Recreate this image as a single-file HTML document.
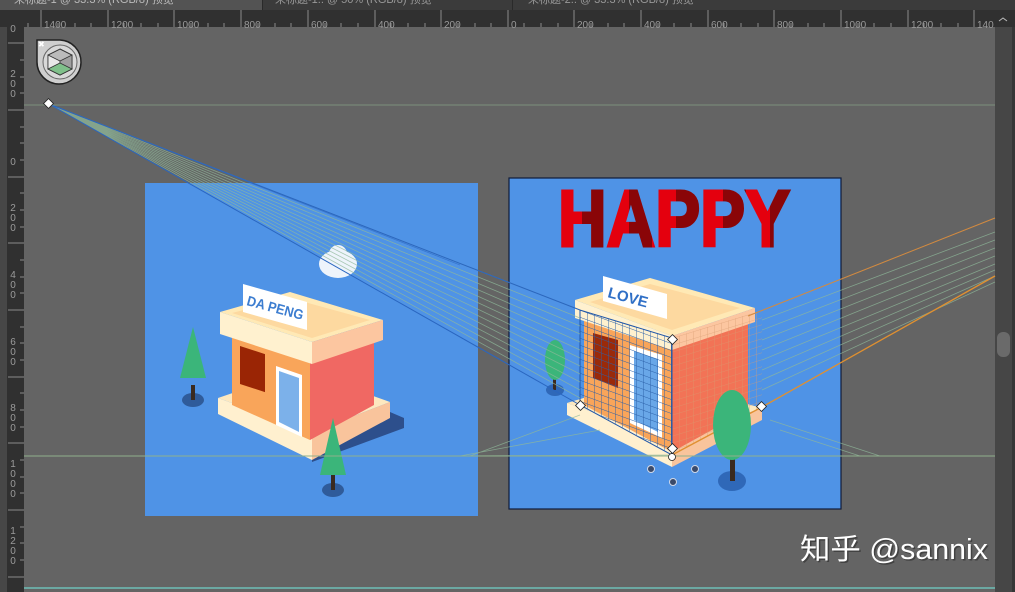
<!DOCTYPE html>
<html><head><meta charset="utf-8"><style>
html,body{margin:0;padding:0;background:#646464;width:1015px;height:592px;overflow:hidden}
svg{display:block}
text{font-family:"Liberation Sans","Noto Sans CJK SC",sans-serif}
</style></head><body>
<svg width="1015" height="592" viewBox="0 0 1015 592" xmlns="http://www.w3.org/2000/svg">
<defs>
<pattern id="gridL" width="7" height="7" patternUnits="userSpaceOnUse" patternTransform="translate(580,310) skewY(20)">
<path d="M0 0H7M0 0V7" stroke="#2a5fa8" stroke-width="0.9" fill="none"/>
</pattern>
<pattern id="gridR" width="7" height="7" patternUnits="userSpaceOnUse" patternTransform="translate(672,338) skewY(-17)">
<path d="M0 0H7M0 0V7" stroke="#d79a70" stroke-width="0.8" fill="none" opacity="0.8"/>
</pattern>
<pattern id="happy" width="47" height="80" patternUnits="userSpaceOnUse" x="558">
<rect width="24" height="80" fill="#e4000e"/><rect x="24" width="23" height="80" fill="#8a0508"/>
</pattern>
<clipPath id="cl1"><rect x="145" y="183" width="333" height="333"/></clipPath>
</defs>
<rect x="0" y="0" width="1015" height="10" fill="#3b3b3b"/>
<rect x="0" y="0" width="262" height="10" fill="#535353"/>
<rect x="262" y="0" width="1" height="10" fill="#2a2a2a"/>
<rect x="512" y="0" width="1" height="10" fill="#2a2a2a"/>
<text x="14" y="3" font-size="11" fill="#bbb">未标题-1 @ 33.3% (RGB/8) 预览</text>
<text x="275" y="3" font-size="11" fill="#999">未标题-1.. @ 50% (RGB/8) 预览</text>
<text x="528" y="3" font-size="11" fill="#999">未标题-2.. @ 33.3% (RGB/8) 预览</text>
<rect x="0" y="10" width="1015" height="17" fill="#303030"/>
<g stroke="#8a8a8a" stroke-width="1">
<path d="M41 10V27M108 10V27M174 10V27M241 10V27M308 10V27M375 10V27M441 10V27M508 10V27M574 10V27M641 10V27M708 10V27M774 10V27M841 10V27M908 10V27M974 10V27"/>
<path d="M28 23V27M58 23V27M75 23V27M91 23V27M124 23V27M141 23V27M158 23V27M191 23V27M208 23V27M224 23V27M258 23V27M275 23V27M291 23V27M325 23V27M341 23V27M358 23V27M391 23V27M408 23V27M425 23V27M458 23V27M475 23V27M491 23V27M524 23V27M541 23V27M558 23V27M591 23V27M608 23V27M624 23V27M658 23V27M674 23V27M691 23V27M724 23V27M741 23V27M758 23V27M791 23V27M808 23V27M824 23V27M858 23V27M874 23V27M891 23V27M924 23V27M941 23V27M958 23V27"/>
</g>
<g font-size="10" fill="#9a9a9a">
<text x="44" y="28">1400</text><text x="111" y="28">1200</text><text x="177" y="28">1000</text><text x="244" y="28">800</text><text x="311" y="28">600</text><text x="378" y="28">400</text><text x="444" y="28">200</text><text x="511" y="28">0</text><text x="577" y="28">200</text><text x="644" y="28">400</text><text x="711" y="28">600</text><text x="777" y="28">800</text><text x="844" y="28">1000</text><text x="911" y="28">1200</text><text x="977" y="28">140</text>
</g>
<rect x="0" y="27" width="24" height="565" fill="#303030"/>
<rect x="0" y="27" width="7" height="565" fill="#474747"/>
<g stroke="#8a8a8a" stroke-width="1">
<path d="M8 43H24M8 110H24M8 177H24M8 243H24M8 310H24M8 377H24M8 443H24M8 510H24M8 577H24"/>
<path d="M20 60H24M20 77H24M20 93H24M20 127H24M20 143H24M20 160H24M20 193H24M20 210H24M20 227H24M20 260H24M20 277H24M20 293H24M20 327H24M20 343H24M20 360H24M20 393H24M20 410H24M20 427H24M20 460H24M20 477H24M20 493H24M20 527H24M20 543H24M20 560H24"/>
</g>
<g font-size="10" fill="#9a9a9a" text-anchor="middle">
<text x="13" y="32">0</text>
<text x="13" y="77">2</text><text x="13" y="87">0</text><text x="13" y="97">0</text>
<text x="13" y="165">0</text>
<text x="13" y="211">2</text><text x="13" y="221">0</text><text x="13" y="231">0</text>
<text x="13" y="278">4</text><text x="13" y="288">0</text><text x="13" y="298">0</text>
<text x="13" y="345">6</text><text x="13" y="355">0</text><text x="13" y="365">0</text>
<text x="13" y="411">8</text><text x="13" y="421">0</text><text x="13" y="431">0</text>
<text x="13" y="467">1</text><text x="13" y="477">0</text><text x="13" y="487">0</text><text x="13" y="497">0</text>
<text x="13" y="534">1</text><text x="13" y="544">2</text><text x="13" y="554">0</text><text x="13" y="564">0</text>
</g>
<rect x="995" y="27" width="20" height="565" fill="#464646"/>
<rect x="1012" y="27" width="3" height="565" fill="#363636"/>
<rect x="997" y="332" width="13" height="25" rx="6" fill="#6a6a6a"/>
<path d="M999 21l4-3 4 3" stroke="#bbb" fill="none"/>

<rect x="145" y="183" width="333" height="333" fill="#4f93e6"/>
<g clip-path="url(#cl1)">
<ellipse cx="338" cy="264" rx="19" ry="14" fill="#eef4fb"/>
<circle cx="338" cy="254" r="9" fill="#eef4fb"/>
<polygon points="312,462 404,428 404,418 390,412 312,452" fill="#2d4f8c"/>
<polygon points="218,398 300,370 390,402 312,432" fill="#fde8bf"/>
<polygon points="218,398 312,432 312,460 218,414" fill="#fff0cf"/>
<polygon points="312,432 390,402 390,418 312,460" fill="#f9c49c"/>
<polygon points="232,333 310,360 310,440 232,405" fill="#f9a55a"/>
<polygon points="310,360 374,338 374,405 310,440" fill="#f06863"/>
<rect x="240" y="348" width="25" height="38" fill="#9a2505" transform="skewY(18) translate(0,-80)"/>
<polygon points="276,366 302,375 302,437 276,425" fill="#fff"/>
<polygon points="279,371 299,378 299,432 279,422" fill="#7cb1ea"/>
<polygon points="220,312 290,292 383,320 312,342" fill="#ffe9b5"/>
<polygon points="232,313 290,298 370,320 312,338" fill="#fdd9a0"/>
<polygon points="220,312 312,342 312,364 220,334" fill="#fff1cf"/>
<polygon points="312,342 383,320 383,340 312,364" fill="#fcc6a0"/>
<polygon points="243,284 307,302 307,330 243,312" fill="#fff"/>
<text x="246" y="305" font-size="14" font-weight="bold" fill="#3c7dd0" transform="rotate(15 246 305)" textLength="58" lengthAdjust="spacingAndGlyphs">DA PENG</text>
<ellipse cx="193" cy="400" rx="11" ry="7" fill="#2f5b9a"/>
<rect x="191" y="385" width="4" height="15" fill="#3a2a20"/>
<polygon points="193,327 206,378 180,378" fill="#3bb57a"/>
<ellipse cx="333" cy="490" rx="11" ry="7" fill="#2f5b9a"/>
<rect x="331" y="474" width="4" height="16" fill="#3a2a20"/>
<polygon points="333,418 346,475 320,475" fill="#3bb57a"/>
</g>

<rect x="509" y="178" width="332" height="331" fill="#4f93e6" stroke="#101c3a" stroke-width="1.2"/>
<text x="558" y="246" font-size="80" font-weight="bold" fill="url(#happy)" stroke="url(#happy)" stroke-width="3" textLength="232" lengthAdjust="spacingAndGlyphs">HAPPY</text>
<polygon points="567,403 650,378 762,408 672,440" fill="#fde8bf"/>
<polygon points="567,403 672,440 672,467 567,415" fill="#fff0cf"/>
<polygon points="672,440 762,408 762,420 672,467" fill="#f9c49c"/>
<polygon points="584,318 672,340 672,452 584,405" fill="#f9a55a"/>
<polygon points="672,340 748,316 748,410 672,452" fill="#f27356"/>
<polygon points="593,333 618,340 618,388 593,378" fill="#9a2a0a"/>
<polygon points="630,345 662,355 662,438 630,423" fill="#fff"/>
<polygon points="634,351 658,359 658,432 634,420" fill="#69a7e8"/>
<polygon points="575,300 650,278 755,308 672,336" fill="#ffe9b5"/>
<polygon points="590,302 650,284 740,308 672,330" fill="#fdd9a0"/>
<polygon points="575,300 672,336 672,350 575,318" fill="#fff1cf"/>
<polygon points="672,336 755,308 755,322 672,350" fill="#fcc6a0"/>
<polygon points="603,276 667,294 667,319 603,301" fill="#fff"/>
<text x="607" y="297" font-size="15" font-weight="bold" fill="#2f6fc6" transform="rotate(15 607 297)">LOVE</text>
<polygon points="580,310 672,338 672,455 580,405" fill="url(#gridL)"/>
<polygon points="672,338 762,310 762,407 672,455" fill="url(#gridR)"/>
<path d="M580,310 L580,405 L672,455 L672,338 Z" stroke="#1f56a8" fill="none"/>
<path d="M672,455 L762,407" stroke="#e09030" stroke-width="1.3"/>
<ellipse cx="555" cy="390" rx="9" ry="6" fill="#2f68b8"/>
<rect x="553" y="375" width="3" height="15" fill="#3a2a20"/>
<ellipse cx="555" cy="360" rx="10" ry="20" fill="#3bb57a"/>
<ellipse cx="732" cy="481" rx="14" ry="10" fill="#2f68b8"/>
<rect x="730" y="458" width="5" height="23" fill="#3a2a20"/>
<ellipse cx="732" cy="425" rx="19" ry="35" fill="#3bb57a"/>

<g stroke="#8fb89a" stroke-width="0.8" fill="none" opacity="0.75">
<path d="M49,104 L580,310M49,104 L580,318M49,104 L580,326M49,104 L580,334M49,104 L580,342M49,104 L580,350M49,104 L580,358M49,104 L580,366M49,104 L580,374M49,104 L580,382M49,104 L580,390M49,104 L580,398"/>
</g>
<path d="M49,104 L580,310" stroke="#2a66c0" stroke-width="1"/>
<path d="M49,104 L580,405" stroke="#2a66c0" stroke-width="1"/>
<path d="M49,104 L460,265" stroke="#2a66c0" stroke-width="0.8" opacity="0.6"/>
<g stroke="#8fb89a" stroke-width="0.8" fill="none" opacity="0.75">
<path d="M762,320 L995,232M762,330 L995,240M762,340 L995,248M762,350 L995,256M762,360 L995,264M762,370 L995,270M762,380 L995,276M762,390 L995,282"/>
<path d="M672,455 L440,456M600,430 L460,456M580,415 L470,456M770,420 L880,456M780,430 L860,456"/>
</g>
<path d="M748,316 L995,218" stroke="#d28a40" stroke-width="1"/>
<path d="M762,407 L995,276" stroke="#e09030" stroke-width="1.3"/>
<path d="M24,105H995" stroke="#8fb08c" stroke-width="0.8" opacity="0.8"/>
<path d="M24,456H995" stroke="#8fb08c" stroke-width="1"/>
<path d="M24,588H995" stroke="#6fd0c8" stroke-width="1.2"/>
<g fill="#fff" stroke="#222" stroke-width="0.8">
<rect x="45" y="100" width="7" height="7" transform="rotate(45 48.5 103.5)"/>
<rect x="669" y="336" width="7" height="7" transform="rotate(45 672.5 339.5)"/>
<rect x="577" y="402" width="7" height="7" transform="rotate(45 580.5 405.5)"/>
<rect x="758" y="403" width="7" height="7" transform="rotate(45 761.5 406.5)"/>
<rect x="669" y="445" width="7" height="7" transform="rotate(45 672.5 448.5)"/>
<circle cx="672" cy="457" r="3.5"/>
</g>
<g fill="#3a4a6a" stroke="#cfd8e8" stroke-width="1">
<circle cx="651" cy="469" r="3.5"/><circle cx="695" cy="469" r="3.5"/><circle cx="673" cy="482" r="3.5"/>
</g>
<path d="M37,40 H60 A22,22 0 1 1 37,62 Z" fill="#cfcfcf" stroke="#222" stroke-width="1.5"/>
<circle cx="60" cy="62" r="17" fill="#d8d8d8" stroke="#666" stroke-width="1"/>
<polygon points="60,49 72,55 72,69 60,75 48,69 48,55" fill="#bbb" stroke="#333" stroke-width="1"/>
<polygon points="48,55 60,61 60,75 48,69" fill="#e8e8e8" stroke="#333" stroke-width="0.8"/>
<polygon points="60,61 72,55 72,69 60,75" fill="#a0a0a0" stroke="#333" stroke-width="0.8"/>
<polygon points="48,69 60,75 72,69 60,63" fill="#7fc08a" stroke="#333" stroke-width="0.8"/>
<text x="38" y="47" font-size="8" fill="#fff">✖</text>
<text x="800" y="559" font-size="29" fill="#222" opacity="0.5" transform="translate(1.5,1.5)" textLength="188" lengthAdjust="spacingAndGlyphs">知乎 @sannix</text>
<text x="800" y="559" font-size="29" fill="#fff" textLength="188" lengthAdjust="spacingAndGlyphs">知乎 @sannix</text>
</svg>
</body></html>
